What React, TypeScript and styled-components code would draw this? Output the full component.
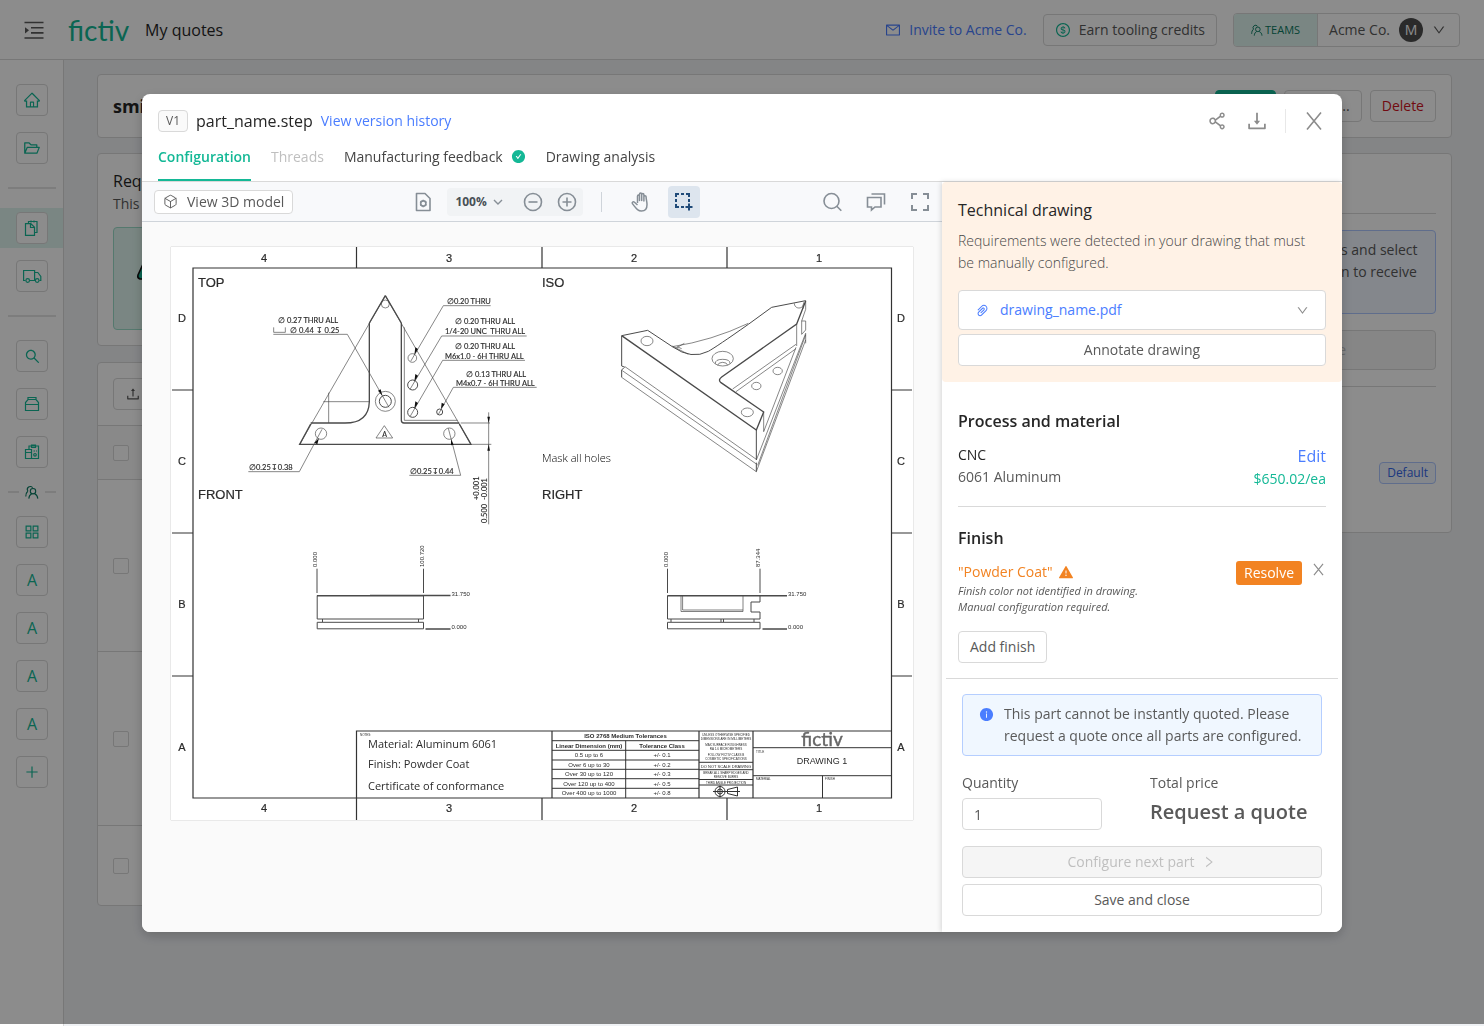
import React from "react";
import styled, { createGlobalStyle, css } from "styled-components";
import {
  AiOutlineHome,
  AiOutlineFolderOpen,
  AiOutlineSearch,
  AiOutlineAppstore,
  AiOutlinePlus,
  AiOutlineMail,
  AiOutlineDollarCircle,
  AiOutlineDown,
  AiOutlineRight,
  AiOutlineShareAlt,
  AiOutlineDownload,
  AiOutlineUpload,
  AiOutlinePaperClip,
  AiFillCheckCircle,
  AiFillInfoCircle,
  AiFillWarning,
} from "react-icons/ai";
import { Box } from "lucide-react";

const teal = "#14b896";
const blue = "#4a7dff";
const line = "#d9d9d9";
const ink = "#262626";
const soft = "#595959";
const orange = "#f28322";

const GlobalStyle = createGlobalStyle`
  *, *::before, *::after { box-sizing: border-box; }
  body { margin: 0; font-family: "Open Sans", "Noto Sans", sans-serif; font-size: 14px; line-height: 22px; color: ${soft}; background: #f0f2f5; }
  button, input { font: inherit; color: inherit; }
  button { cursor: pointer; }
  h1, h2, h3, p { margin: 0; padding: 0; }
  a { color: ${blue}; text-decoration: none; }
  svg { flex: none; }
`;

/* ---------- application shell ---------- */

const Shell = styled.div`
  min-height: 100vh;
  display: flex;
  flex-direction: column;
`;

const TopBar = styled.header`
  height: 60px;
  padding: 0 24px;
  display: flex;
  align-items: center;
  background: #fff;
  border-bottom: 1px solid ${line};
`;

const PlainButton = styled.button`
  display: inline-flex;
  align-items: center;
  justify-content: center;
  padding: 0;
  border: 0;
  background: none;
`;

const Logo = styled.span`
  margin: 0 16px 0 24px;
  color: ${teal};
  font-family: Lato, sans-serif;
  font-size: 28px;
  line-height: 32px;
`;

const PageName = styled.h1`
  font-size: 16px;
  font-weight: 400;
  color: ${ink};
`;

const TopActions = styled.div`
  margin-left: auto;
  display: flex;
  align-items: center;
  gap: 16px;
`;

const IconLink = styled.a`
  display: inline-flex;
  align-items: center;
  gap: 8px;
`;

const Button = styled.button<{ $block?: boolean; $tone?: string }>`
  display: inline-flex;
  align-items: center;
  justify-content: center;
  gap: 8px;
  height: 32px;
  padding: 0 11px;
  border: 1px solid ${line};
  border-radius: 4px;
  background: #fff;
  color: ${(p) => p.$tone || soft};
  white-space: nowrap;
  ${(p) => p.$block && css`width: 100%;`}
  &:disabled {
    background: #f5f5f5;
    color: #bfbfbf;
    cursor: default;
  }
`;

const TeamSwitch = styled.div`
  display: flex;
  height: 34px;
  border: 1px solid ${line};
  border-radius: 4px;
  overflow: hidden;
`;

const TeamTag = styled.span`
  display: flex;
  align-items: center;
  gap: 2px;
  padding: 0 17px;
  border-right: 1px solid ${line};
  background: #def5ee;
  color: #0a7a62;
  font-size: 11px;
`;

const Account = styled(PlainButton)`
  gap: 9px;
  padding: 0 13px 0 11px;
`;

const Avatar = styled.span`
  display: grid;
  place-items: center;
  width: 24px;
  height: 24px;
  border-radius: 50%;
  background: #4d4d4d;
  color: #fff;
`;

const Main = styled.div`
  flex: 1;
  display: flex;
`;

const SideNav = styled.nav`
  width: 64px;
  flex: none;
  padding-top: 20px;
  display: flex;
  flex-direction: column;
  gap: 8px;
  background: #fff;
  border-right: 1px solid ${line};
`;

const NavSlot = styled.div<{ $active?: boolean }>`
  height: 40px;
  padding-left: 16px;
  display: flex;
  align-items: center;
  background: ${(p) => (p.$active ? "#def5ee" : "transparent")};
`;

const NavButton = styled.button`
  display: grid;
  place-items: center;
  width: 32px;
  height: 32px;
  padding: 0;
  border: 1px solid ${line};
  border-radius: 4px;
  background: #fff;
  color: ${teal};
  font-size: 16px;
  font-weight: 500;
`;

const NavRule = styled.div`
  height: 24px;
  padding: 0 7px 0 8px;
  display: flex;
  align-items: center;
  gap: 6px;
  color: #0a7a62;
  &::before,
  &::after {
    content: "";
    flex: 1;
    height: 2px;
    background: #e4e4e4;
  }
`;

const NavRulePlain = styled(NavRule)`
  gap: 0;
`;

const Content = styled.main`
  flex: 1;
  padding: 14px 32px 0 33px;
  display: flex;
  flex-direction: column;
  gap: 15px;
`;

const Card = styled.section`
  border: 1px solid ${line};
  border-radius: 4px;
  background: #fff;
`;

const TitleCard = styled(Card)`
  height: 64px;
  padding: 0 15px;
  display: flex;
  align-items: center;
  gap: 8px;
`;

const QuoteName = styled.h2`
  margin-right: auto;
  font-size: 18px;
  font-weight: 700;
  color: ${ink};
`;

const Primary = styled(Button)`
  width: 61px;
  background: ${teal};
  border-color: ${teal};
`;

const Clipped = styled(Button)`
  width: 78px;
  justify-content: flex-end;
`;

const Columns = styled.div`
  display: flex;
  align-items: flex-start;
  gap: 16px;
`;

const MainColumn = styled.div`
  flex: 1;
  display: flex;
  flex-direction: column;
  gap: 16px;
`;

const RequirementCard = styled(Card)`
  padding: 15px;
`;

const SmallHeading = styled.h3`
  font-size: 16px;
  line-height: 24px;
  font-weight: 400;
  color: ${ink};
`;

const Choice = styled.div`
  width: 180px;
  height: 103px;
  margin-top: 12px;
  padding: 32px 21px;
  border: 1px solid #9bdcc9;
  border-radius: 4px;
  background: #def5ee;
`;

const PartsToolbar = styled.div`
  padding: 15px;
`;

const PartsRow = styled.div<{ $size: number; $head?: boolean }>`
  height: ${(p) => p.$size}px;
  padding-left: 15px;
  display: flex;
  align-items: center;
  border-top: 1px solid ${line};
  background: ${(p) => (p.$head ? "#fafafa" : "transparent")};
`;

const Tick = styled.input`
  appearance: none;
  width: 16px;
  height: 16px;
  margin: 0;
  border: 1px solid ${line};
  border-radius: 2px;
  background: #fff;
`;

const SummaryCard = styled(Card)`
  width: 340px;
  height: 380px;
  padding: 59px 15px 0;
  display: flex;
  flex-direction: column;
  align-items: stretch;
`;

const Rule = styled.hr`
  width: 100%;
  margin: 0;
  border: 0;
  border-top: 1px solid ${line};
`;

const SummaryNotice = styled.div`
  height: 84px;
  margin: 16px 0;
  padding: 8px 0 0 212px;
  border: 1px solid #adc6ff;
  border-radius: 4px;
  background: #f0f6ff;
  white-space: nowrap;
`;

const SummaryButton = styled(Button)`
  height: 40px;
  margin-bottom: 16px;
  padding: 0 89px;
  justify-content: flex-end;
`;

const DefaultTag = styled.span`
  align-self: flex-end;
  margin-top: 75px;
  padding: 0 7px;
  border: 1px solid #adc6ff;
  border-radius: 4px;
  background: #f0f6ff;
  color: #3566e8;
  font-size: 12px;
  line-height: 20px;
`;

/* ---------- dialog ---------- */

const Scrim = styled.div`
  position: fixed;
  inset: 0 0 2px;
  padding-top: 94px;
  display: flex;
  justify-content: center;
  align-items: flex-start;
  background: rgba(0, 0, 0, 0.45);
`;

const Dialog = styled.section`
  width: 1200px;
  max-width: calc(100vw - 48px);
  border-radius: 8px;
  overflow: hidden;
  background: #fff;
  box-shadow: 0 4px 12px rgba(0, 0, 0, 0.2);
`;

const DialogHead = styled.header`
  padding: 16px 16px 0;
  border-bottom: 1px solid ${line};
`;

const HeadRow = styled.div`
  height: 22px;
  display: flex;
  align-items: center;
  gap: 8px;
`;

const Version = styled.span`
  padding: 0 7px;
  border: 1px solid ${line};
  border-radius: 4px;
  background: #fafafa;
  font-size: 12px;
  line-height: 20px;
`;

const FileName = styled.h2`
  font-size: 16px;
  font-weight: 400;
  color: ${ink};
`;

const HeadTools = styled.div`
  margin-left: auto;
  display: flex;
  align-items: center;
  gap: 16px;
  color: #8c8c8c;
`;

const HeadTool = styled(PlainButton)`
  width: 24px;
  height: 24px;
`;

const HeadDivider = styled.span`
  width: 1px;
  height: 24px;
  background: #e8e8e8;
`;

const Tabs = styled.div`
  margin-top: 8px;
  display: flex;
  gap: 20px;
`;

const Tab = styled.button<{ $active?: boolean }>`
  height: 41px;
  padding: 0 0 6px;
  display: inline-flex;
  align-items: center;
  gap: 8px;
  border: 0;
  border-bottom: 2px solid ${(p) => (p.$active ? teal : "transparent")};
  background: none;
  color: ${(p) => (p.$active ? teal : "#454545")};
  font-weight: ${(p) => (p.$active ? 600 : 400)};
  &:disabled {
    color: #bfbfbf;
  }
`;

const DialogBody = styled.div`
  display: flex;
`;

const Viewer = styled.div`
  flex: 1;
  min-width: 0;
  background: #fafafa;
`;

const ViewerBar = styled.div`
  height: 40px;
  padding: 0 12px;
  display: flex;
  align-items: center;
  border-bottom: 1px solid #cfd4da;
  background: #f8f9fb;
  color: #868e96;
`;

const ModelButton = styled(Button)`
  height: 24px;
  padding: 0 8px;
  gap: 9px;
`;

const CentreTools = styled.div`
  margin-left: 114px;
  display: flex;
  align-items: center;
`;

const ToolButton = styled(PlainButton)<{ $active?: boolean }>`
  width: 32px;
  height: 32px;
  border-radius: 4px;
  color: ${(p) => (p.$active ? "#1f4a78" : "inherit")};
  background: ${(p) => (p.$active ? "#dde5ee" : "none")};
`;

const ZoomGroup = styled.div`
  height: 28px;
  margin: 0 18px 0 8px;
  padding-left: 8px;
  display: flex;
  align-items: center;
  gap: 2px;
  border-radius: 4px;
  background: #f1f3f5;
`;

const ZoomLevel = styled(PlainButton)`
  margin-right: 12px;
  gap: 6px;
  color: #485056;
  font-size: 12px;
  font-weight: 700;
  svg {
    color: #868e96;
  }
`;

const ToolDivider = styled.span`
  width: 1px;
  height: 20px;
  background: #cfd4da;
`;

const ModeTools = styled.div`
  margin-left: 22px;
  display: flex;
  gap: 12px;
`;

const EndTools = styled.div`
  margin-left: auto;
  margin-right: -6px;
  display: flex;
  gap: 12px;
`;

const Sheet = styled.div`
  margin: 25px 29px 0;
  background: #fff;
  box-shadow: 0 0 1px rgba(0, 0, 0, 0.4);
  svg {
    display: block;
    width: 100%;
    height: auto;
  }
`;

const Panel = styled.aside`
  width: 400px;
  flex: none;
  z-index: 1;
  background: #fff;
  box-shadow: -1px 0 5px rgba(0, 0, 0, 0.15);
`;

const Warning = styled.section`
  padding: 16px;
  border-radius: 4px;
  background: #fff2e6;
  p {
    margin: 8px 0 16px;
    padding-right: 12px;
    color: #484848;
    font-weight: 300;
  }
`;

const DrawingPicker = styled.button`
  width: 100%;
  height: 40px;
  margin-bottom: 4px;
  padding: 0 16px;
  display: flex;
  align-items: center;
  gap: 10px;
  border: 1px solid ${line};
  border-radius: 4px;
  background: #fff;
  color: ${blue};
  svg:last-child {
    margin-left: auto;
    color: #8c8c8c;
  }
`;

const Section = styled.section`
  margin: 0 16px;
`;

const ProcessSection = styled(Section)`
  padding: 27px 0 16px;
  border-bottom: 1px solid ${line};
`;

const FinishSection = styled(Section)`
  padding: 19px 0 15px;
`;

const BoldHeading = styled.h3`
  font-size: 16px;
  line-height: 24px;
  font-weight: 600;
  color: ${ink};
`;

const Split = styled.div`
  margin-top: 11px;
  display: flex;
  justify-content: space-between;
`;

const Strong = styled.div`
  color: ${ink};
`;

const Price = styled.div`
  text-align: right;
  color: ${teal};
`;

const EditLink = styled.a`
  font-size: 16px;
  line-height: 24px;
`;

const FinishName = styled.div`
  display: flex;
  align-items: center;
  gap: 5px;
  color: ${orange};
`;

const FinishNote = styled.p`
  font-size: 11px;
  line-height: 16px;
  font-style: italic;
`;

const FinishActions = styled.div`
  display: flex;
  align-items: flex-start;
  gap: 8px;
`;

const Resolve = styled.button`
  height: 24px;
  padding: 0 8px;
  border: 0;
  border-radius: 3px;
  background: ${orange};
  color: #fff;
`;

const Dismiss = styled(PlainButton)`
  width: 16px;
  height: 16px;
  color: #8c8c8c;
`;

const AddFinish = styled(Button)`
  margin-top: 16px;
`;

const Footer = styled.footer`
  margin: 0 4px;
  padding: 15px 16px 16px;
  border-top: 1px solid ${line};
`;

const Notice = styled.div`
  padding: 8px 16px;
  display: flex;
  gap: 10px;
  border: 1px solid #b5ceff;
  border-radius: 4px;
  background: #f0f7ff;
  svg {
    margin-top: 4px;
    color: ${blue};
  }
`;

const QuoteRow = styled.div`
  margin: 16px 0;
  display: flex;
  gap: 48px;
`;

const Field = styled.label`
  display: flex;
  flex-direction: column;
  gap: 4px;
`;

const QuantityInput = styled.input`
  width: 140px;
  height: 32px;
  padding: 0 11px;
  border: 1px solid ${line};
  border-radius: 4px;
  background: #fff;
`;

const Total = styled.strong`
  font-size: 20px;
  line-height: 28px;
  font-weight: 600;
`;

const NextButton = styled(Button)`
  margin-bottom: 6px;
`;

/* ---------- icons ---------- */

type GlyphProps = { size?: number; box?: number; width?: number; children: React.ReactNode };

const Glyph = ({ size = 20, box = 20, width = 1.6, children }: GlyphProps) => (
  <svg width={size} height={size} viewBox={`0 0 ${box} ${box}`} fill="none" stroke="currentColor" strokeWidth={width} aria-hidden="true">
    {children}
  </svg>
);

const MenuIcon = () => (
  <Glyph width={1.6}>
    <path d="M.5 2.500h19M7 7.700h12.500M7 12.900h12.500M.5 18h19" />
    <path d="M1 7.200v6.200l4-3.100z" fill="currentColor" stroke="none" />
  </Glyph>
);

const CrossIcon = ({ size, width }: { size: number; width: number }) => (
  <Glyph size={size} box={20} width={width}>
    <path d="M3 1.500L17 18.500M17 1.500L3 18.500" />
  </Glyph>
);

const PeopleIcon = ({ size = 14 }: { size?: number }) => (
  <Glyph size={size} box={14} width={1.1}>
    <path d="M2.900 6A2.700 2.700 0 1 1 7.600 2.700M.8 11.500C.8 8.800 1.600 7.200 2.900 6" />
    <circle cx="8" cy="6.200" r="2.700" />
    <path d="M3.800 13.600c.2-2.600 1.200-4 2.900-4.900M9.600 8.800c2 .9 3 2.300 3.200 4.800" />
  </Glyph>
);

const PagesIcon = () => (
  <Glyph size={18} box={18} width={1.2}>
    <path d="M5.500 4.500V2.500h8.500v11h-2.500M8 1.500v2M11 1.500v2" />
    <path d="M2.500 4.600h5.300l3.700 3.700v8h-9zM7.500 4.800v3.700h3.800" />
  </Glyph>
);

const TruckIcon = () => (
  <Glyph size={20} box={20} width={1.2}>
    <path d="M3.500 14.500H1.600v-10h11v10H8M12.600 6.500h3.200l3 4v4h-1.400M13.500 14.500h-1" />
    <circle cx="5.700" cy="14.500" r="1.800" />
    <circle cx="15.200" cy="14.500" r="1.800" />
  </Glyph>
);

const CaseIcon = () => (
  <Glyph size={18} box={18} width={1.2}>
    <path d="M5 4.500V2.500h8v2M2.500 9V7.500l2.500-3h8l2.500 3V15.500h-13zM2.500 9.500h13" />
  </Glyph>
);

const ClipboardIcon = () => (
  <Glyph size={18} box={18} width={1.2}>
    <path d="M6 6V3h9.500v12.500H8.500M8.500 2h4v2.500h-4zM2.500 6.500h6v9h-6zM2.500 9.500h6M10.500 8h1.500M13 8h1" />
    <circle cx="12" cy="11.800" r="1.300" />
  </Glyph>
);

const DocGearIcon = () => (
  <Glyph>
    <path d="M3.500 1.500h8.500l5 5v12h-13.500z" strokeLinejoin="round" />
    <circle cx="10.300" cy="11.500" r="2.600" />
    <path d="M10.300 7.800v1.200M10.300 14v1.200M7.100 9.700l1.100.6M12.400 12.700l1.100.6M7.100 13.300l1.100-.6M12.400 10.300l1.100-.6" />
  </Glyph>
);

const MinusIcon = () => (
  <Glyph>
    <circle cx="10" cy="10" r="8.500" />
    <path d="M5.500 10h9" />
  </Glyph>
);

const PlusCircleIcon = () => (
  <Glyph>
    <circle cx="10" cy="10" r="8.500" />
    <path d="M5.500 10h9M10 5.500v9" />
  </Glyph>
);

const HandIcon = () => (
  <Glyph width={1.5}>
    <path d="M6.500 11V4.200c0-1.500 2-1.500 2 0V8.500 2.200c0-1.500 2.200-1.500 2.200 0V8.500 2.700c0-1.500 2.200-1.500 2.200 0V9 4.700c0-1.400 2.200-1.400 2.200 0 0 2.800.9 4.800.9 8 0 3.600-2 6.300-5.500 6.300-4 0-5.400-2.800-9-7.200-1-1.400.7-2.600 2-1.500L6.500 13" transform="translate(1 0)" strokeLinejoin="round" />
  </Glyph>
);

const MarqueeIcon = () => (
  <Glyph width={2}>
    <path d="M2 5V2h3M7 2h3M12 2h3v3M15 7v3M2 7v3M2 12v3h3M7 15h3" />
    <path d="M15 11.500v7M11.500 15h7" />
  </Glyph>
);

const MagnifierIcon = () => (
  <Glyph>
    <circle cx="9.500" cy="9" r="7.500" />
    <path d="M14.800 14.300l4.500 4.500" />
  </Glyph>
);

const CommentIcon = () => (
  <Glyph>
    <path d="M5.500 2h13v10.500M1.500 5.500h13.500v9.500H9l-3.500 3v-3h-4z" />
  </Glyph>
);

const ExpandIcon = () => (
  <Glyph width={2}>
    <path d="M2 7V2h5M13 2h5v5M18 13v5h-5M7 18H2v-5" />
  </Glyph>
);

/* ---------- drawing sheet ---------- */

const SheetSvg = styled.svg`
  font-family: "Liberation Sans", Arial, sans-serif;
  fill: #2b2b2b;
`;

const zoneNumbers = [["4", 264], ["3", 449], ["2", 634], ["1", 819]] as const;
const zoneLetters = [["D", 318], ["C", 461], ["B", 604], ["A", 747]] as const;
const viewTitles = [["TOP", 198, 287], ["ISO", 542, 287], ["FRONT", 198, 499], ["RIGHT", 542, 499]] as const;
const callouts: [string, number, number][] = [
  ["∅0.20 THRU", 447, 304],
  ["∅ 0.27 THRU ALL", 278, 323],
  ["∅ 0.44 ↧ 0.25", 290, 333],
  ["∅ 0.20 THRU ALL", 455, 324],
  ["1/4-20 UNC\u00a0 THRU ALL", 445, 334],
  ["∅ 0.20 THRU ALL", 455, 349],
  ["M6x1.0 - 6H THRU ALL", 445, 359],
  ["∅ 0.13 THRU ALL", 466, 377],
  ["M4x0.7 - 6H THRU ALL", 456, 386],
  ["∅0.25↧0.38", 249, 470],
  ["∅0.25↧0.44", 410, 474],
];
const tolerances = [
  ["0.5 up to 6", "+/- 0.1"],
  ["Over 6 up to 30", "+/- 0.2"],
  ["Over 30 up to 120", "+/- 0.3"],
  ["Over 120 up to 400", "+/- 0.5"],
  ["Over 400 up to 1000", "+/- 0.8"],
];
const finePrint: [string, number][] = [
  ["UNLESS OTHERWISE SPECIFIED", 736],
  ["DIMENSIONS ARE IN MILLIMETERS", 740],
  ["MAX SURFACE ROUGHNESS", 746],
  ["RA 1.6 MICROMETERS", 750],
  ["FOLLOW FICTIV CLASS B", 756],
  ["COSMETIC SPECIFICATIONS", 760],
  ["BREAK ALL SHARP EDGES AND", 774],
  ["REMOVE BURRS", 778],
];

const DrawingSheet = () => (
  <SheetSvg viewBox="171 247 742 573" role="img" aria-label="Technical drawing">
    <g fill="none" stroke="#333" strokeWidth="1.200">
      <path d="M193 268H891.500V798H193z" />
      <path d="M356.500 247v21M542 247v21M727 247v21M356.500 798v22M542 798v22M727 798v22" />
      <path d="M172 390h21M172 533h21M172 676h21M891.500 390H912M891.500 533H912M891.500 676H912" />
      <path d="M356.500 798V731H891.500M552 731V798M699 731V798M753 731V798" />
    </g>
    <g fontSize="11" textAnchor="middle" stroke="#2b2b2b" strokeWidth=".2">
      {zoneNumbers.map(([n, x]) => (
        <React.Fragment key={n}>
          <text x={x} y={262}>{n}</text>
          <text x={x} y={812}>{n}</text>
        </React.Fragment>
      ))}
      {zoneLetters.map(([n, y]) => (
        <React.Fragment key={n}>
          <text x={182} y={y + 4}>{n}</text>
          <text x={901} y={y + 4}>{n}</text>
        </React.Fragment>
      ))}
    </g>
    <g fontSize="13" stroke="#2b2b2b" strokeWidth=".2">
      {viewTitles.map(([n, x, y]) => (
        <text key={n} x={x} y={y}>{n}</text>
      ))}
    </g>

    {/* top view */}
    <g transform="translate(170 240) scale(.33333)" fill="none" stroke="#4a4a4a" strokeWidth="2">
      <path d="M389 613L646 167L903 613" />
      <path strokeWidth="4" d="M646 167L598 249M646 167L694 249M422 552L389 613H903L868 552M598 249V485Q596 549 525 549H422M694 249V541Q694 549 702 549H868" />
      <path d="M703 262V541H863M460 485H598M476 458V549" />
      <circle cx="646" cy="192" r="12" />
      <circle cx="646" cy="484" r="30" />
      <circle cx="646" cy="484" r="18" strokeWidth="3" />
      <circle cx="727" cy="354" r="13" />
      <circle cx="728" cy="435" r="15" strokeWidth="3" />
      <circle cx="728" cy="517" r="15" strokeWidth="3" />
      <circle cx="809" cy="516" r="9" strokeWidth="3" />
      <circle cx="453" cy="581" r="17" />
      <circle cx="838" cy="581" r="17" />
      <path d="M643 557L618 594H668z" />
      <path d="M962 197H820L722 364M1070 288H815L720 448M1065 361H818L720 530M1100 442H850L804 525M310 283H532L657 502M311 262V277H346V262M235 695H388L456 568M718 706H872L835 565" />
      <path d="M956 517V853M872 549H960M905 613H964" />
      <g fill="#111" stroke="none">
        <path d="M733 345L736 322L744 327zM733 425L736 402L744 407zM733 507L736 484L744 489zM813 507L815 488L824 493zM637 467L624 452L632 448zM447 594L433 608L442 613zM843 598L843 616L851 614zM956 549L952 530H960zM956 613L952 632H960z" />
      </g>
    </g>
    <g fontSize="7.500" fontFamily="Lato, sans-serif" stroke="#2b2b2b" strokeWidth=".15">
      {callouts.map(([t, x, y], i) => (
        <text key={i} x={x} y={y}>{t}</text>
      ))}
      <text x="384.500" y="436.500" textAnchor="middle" fontSize="7">A</text>
      <text transform="translate(487 523) rotate(-90)">0.500{"\u00a0 "}-0.001</text>
      <text transform="translate(479 500) rotate(-90)">+0.001</text>
    </g>

    {/* isometric view */}
    <g transform="translate(535 240) scale(.33333)" fill="none" stroke="#4a4a4a" strokeWidth="2">
      <path strokeWidth="4" d="M260 287L664 570L686 516L558 428Q548 420 560 411L785 252L812 183" />
      <path strokeWidth="3" d="M260 287L338 271L412 320Q470 360 520 334Q545 320 640 253L710 202L812 182M260 287V378L270 382M664 570V660M260 412V390L266 384M664 695V668" />
      <path d="M412 320Q530 302 640 250M420 326L448 310M412 318L460 343M426 320L440 326" />
      <path d="M270 380L664 658M262 392L664 672M260 412L664 695L812 300M668 676L812 285M664 660L812 280" />
      <path d="M812 182V208L800 243V283M800 243H812V270L800 283M785 252V318M812 280V310M686 516V575L783 322M783 313L593 447M783 326L603 455M806 187L804 206" />
      <ellipse cx="336" cy="303" rx="18" ry="14" />
      <ellipse cx="637" cy="517" rx="18" ry="13" />
      <ellipse cx="728" cy="393" rx="14" ry="11" />
      <ellipse cx="664" cy="438" rx="14" ry="11" />
      <path d="M778 190C778 208 804 208 804 194" />
      <ellipse cx="563" cy="356" rx="32" ry="22" />
      <path d="M541 371Q540 358 563 358Q586 358 585 371M548 376Q550 367 563 367Q576 367 578 376" />
    </g>
    <text x="542" y="462" fontSize="11" fontFamily="Open Sans, sans-serif" fontWeight="300" fill="#000">Mask all holes</text>

    {/* front and right views */}
    <g fill="none" stroke="#4a4a4a" strokeWidth="1">
      <path d="M317 568.700V593M423.500 568.700V593M317.200 595.500V619H423.500V595.500M317.200 622.300H423.500V628.800H317.200zM322.500 619v3M418.500 619v3" />
      <path strokeWidth="1.400" d="M317 595.700H423.500M370 595.500H450.500M425.500 629H450.500" />
      <path d="M667.500 568.700V593M760 568.700V593M667.500 595.500V619H760V612H751V602H760V596M667.500 622.300H760V628.800H667.500zM671 619v3M721 619v3M723.500 619v3M754 619v3" />
      <path strokeWidth=".7" d="M681 596V611.500H743V596M682.600 596V610H743" />
      <path strokeWidth="1.400" d="M667.500 595.700H787M762.500 629H787" />
    </g>
    <g fontSize="6">
      <text x="451.500" y="596">31.750</text>
      <text x="451.500" y="629">0.000</text>
      <text x="788" y="596">31.750</text>
      <text x="788" y="629">0.000</text>
      <text transform="translate(317 567) rotate(-90)">0.000</text>
      <text transform="translate(424 567) rotate(-90)">100.720</text>
      <text transform="translate(668 567) rotate(-90)">0.000</text>
      <text transform="translate(760 567) rotate(-90)">87.344</text>
    </g>

    {/* title block */}
    <g fill="none" stroke="#333" strokeWidth="1">
      <path d="M552 740.700H699M552 750.300H699M552 760H699M552 769.300H699M552 778.700H699M552 788.300H699M625.700 740.700V798" />
      <path d="M699 762.300H753M699 769.700H753M699 779.500H753M699 785H753M753 747.700H891M753 775.700H891M822.500 775.700V798" />
      <circle cx="720" cy="791.500" r="5" />
      <circle cx="720" cy="791.500" r="2.500" />
      <path d="M713 791.500H740M720 785.500V797.500M727.500 789.500L737.500 787V796L727.500 793.500z" />
    </g>
    <g fontFamily="Open Sans, sans-serif" fontSize="11">
      <text x="368" y="748">Material: Aluminum 6061</text>
      <text x="368" y="768">Finish: Powder Coat</text>
      <text x="368" y="790">Certificate of conformance</text>
    </g>
    <g fontSize="6" textAnchor="middle">
      <g fontWeight="700">
        <text x="625.500" y="738">ISO 2768 Medium Tolerances</text>
        <text x="589" y="747.500">Linear Dimension (mm)</text>
        <text x="662" y="747.500">Tolerance Class</text>
      </g>
      {tolerances.map(([range, value], i) => (
        <React.Fragment key={range}>
          <text x="589" y={757 + i * 9.5}>{range}</text>
          <text x="662" y={757 + i * 9.5}>{value}</text>
        </React.Fragment>
      ))}
    </g>
    <g fontSize="3" textAnchor="middle">
      {finePrint.map(([t, y]) => (
        <text key={t} x="726" y={y}>{t}</text>
      ))}
      <text x="726" y="783.500">THIRD ANGLE PROJECTION</text>
      <text x="726" y="767.500" fontSize="4">DO NOT SCALE DRAWING</text>
    </g>
    <g fontSize="3">
      <text x="360" y="736">NOTES:</text>
      <text x="756" y="752.500">TITLE</text>
      <text x="756" y="780">MATERIAL</text>
      <text x="825" y="780">FINISH</text>
    </g>
    <text x="822" y="746" textAnchor="middle" fontSize="19" fontFamily="Lato, sans-serif" fill="#666" stroke="#666" strokeWidth=".4">fictiv</text>
    <text x="822" y="764" textAnchor="middle" fontSize="9">DRAWING 1</text>
  </SheetSvg>
);

/* ---------- page ---------- */

const navGroups: { label: string; icon: React.ReactNode; active?: boolean }[][] = [
  [
    { label: "Home", icon: <AiOutlineHome size={18} /> },
    { label: "Projects", icon: <AiOutlineFolderOpen size={18} /> },
  ],
  [
    { label: "Quotes", icon: <PagesIcon />, active: true },
    { label: "Orders", icon: <TruckIcon /> },
  ],
  [
    { label: "Search", icon: <AiOutlineSearch size={17} /> },
    { label: "Materials", icon: <CaseIcon /> },
    { label: "Inspections", icon: <ClipboardIcon /> },
  ],
];

const Background = () => (
  <Shell>
    <TopBar>
      <PlainButton aria-label="Expand menu">
        <MenuIcon />
      </PlainButton>
      <Logo>fictiv</Logo>
      <PageName>My quotes</PageName>
      <TopActions>
        <IconLink href="#invite">
          <AiOutlineMail size={16} />
          Invite to Acme Co.
        </IconLink>
        <Button>
          <AiOutlineDollarCircle size={16} color={teal} />
          Earn tooling credits
        </Button>
        <TeamSwitch>
          <TeamTag>
            <PeopleIcon size={12} />
            TEAMS
          </TeamTag>
          <Account>
            Acme Co.
            <Avatar>M</Avatar>
            <AiOutlineDown size={14} />
          </Account>
        </TeamSwitch>
      </TopActions>
    </TopBar>
    <Main>
      <SideNav>
        {navGroups.map((group, g) => (
          <React.Fragment key={g}>
            {g > 0 && <NavRulePlain />}
            {group.map((item) => (
              <NavSlot key={item.label} $active={item.active}>
                <NavButton aria-label={item.label}>{item.icon}</NavButton>
              </NavSlot>
            ))}
          </React.Fragment>
        ))}
        <NavRule>
          <PeopleIcon />
        </NavRule>
        <NavSlot>
          <NavButton aria-label="Dashboard"><AiOutlineAppstore size={18} /></NavButton>
        </NavSlot>
        {[1, 2, 3, 4].map((n) => (
          <NavSlot key={n}>
            <NavButton>A</NavButton>
          </NavSlot>
        ))}
        <NavSlot>
          <NavButton aria-label="Add team"><AiOutlinePlus size={16} /></NavButton>
        </NavSlot>
      </SideNav>
      <Content>
        <TitleCard>
          <QuoteName>smi</QuoteName>
          <Primary aria-label="Share quote" />
          <Clipped>...</Clipped>
          <Button $tone="#cf1322">Delete</Button>
        </TitleCard>
        <Columns>
          <MainColumn>
            <RequirementCard>
              <SmallHeading>Req</SmallHeading>
              <p>This</p>
              <Choice>
                <Glyph size={22} box={22}>
                  <path d="M9 2L3 15q-1 3 2 4h14V2z" fill={teal} stroke="#111" />
                </Glyph>
              </Choice>
            </RequirementCard>
            <Card>
              <PartsToolbar>
                <Button aria-label="Upload parts"><AiOutlineUpload size={16} /></Button>
              </PartsToolbar>
              <PartsRow $size={54} $head><Tick type="checkbox" aria-label="Select all parts" /></PartsRow>
              <PartsRow $size={172}><Tick type="checkbox" aria-label="Select part 1" /></PartsRow>
              <PartsRow $size={174}><Tick type="checkbox" aria-label="Select part 2" /></PartsRow>
              <PartsRow $size={80}><Tick type="checkbox" aria-label="Select part 3" /></PartsRow>
            </Card>
          </MainColumn>
          <SummaryCard>
            <Rule />
            <SummaryNotice>
              s and select
              <br />n to receive
            </SummaryNotice>
            <SummaryButton disabled>e</SummaryButton>
            <Rule />
            <DefaultTag>Default</DefaultTag>
          </SummaryCard>
        </Columns>
      </Content>
    </Main>
  </Shell>
);

export default function App() {
  return (
    <>
      <GlobalStyle />
      <Background />
      <Scrim>
        <Dialog role="dialog" aria-label="part_name.step">
          <DialogHead>
            <HeadRow>
              <Version>V1</Version>
              <FileName>part_name.step</FileName>
              <a href="#history">View version history</a>
              <HeadTools>
                <HeadTool aria-label="Share"><AiOutlineShareAlt size={22} /></HeadTool>
                <HeadTool aria-label="Download"><AiOutlineDownload size={24} /></HeadTool>
                <HeadDivider />
                <HeadTool aria-label="Close"><CrossIcon size={20} width={1.6} /></HeadTool>
              </HeadTools>
            </HeadRow>
            <Tabs role="tablist">
              <Tab role="tab" $active>Configuration</Tab>
              <Tab role="tab" disabled>Threads</Tab>
              <Tab role="tab">
                Manufacturing feedback
                <AiFillCheckCircle size={15} color={teal} />
              </Tab>
              <Tab role="tab">Drawing analysis</Tab>
            </Tabs>
          </DialogHead>
          <DialogBody>
            <Viewer>
              <ViewerBar>
                <ModelButton><Box size={15} strokeWidth={1.5} />View 3D model</ModelButton>
                <CentreTools>
                  <ToolButton aria-label="Page settings"><DocGearIcon /></ToolButton>
                  <ZoomGroup>
                    <ZoomLevel>100%<Glyph size={10} box={10} width={1.4}><path d="M1 3l4 4 4-4" /></Glyph></ZoomLevel>
                    <ToolButton aria-label="Zoom out"><MinusIcon /></ToolButton>
                    <ToolButton aria-label="Zoom in"><PlusCircleIcon /></ToolButton>
                  </ZoomGroup>
                  <ToolDivider />
                  <ModeTools>
                    <ToolButton aria-label="Pan"><HandIcon /></ToolButton>
                    <ToolButton aria-label="Select area" $active><MarqueeIcon /></ToolButton>
                  </ModeTools>
                </CentreTools>
                <EndTools>
                  <ToolButton aria-label="Search drawing"><MagnifierIcon /></ToolButton>
                  <ToolButton aria-label="Comments"><CommentIcon /></ToolButton>
                  <ToolButton aria-label="Full screen"><ExpandIcon /></ToolButton>
                </EndTools>
              </ViewerBar>
              <Sheet><DrawingSheet /></Sheet>
            </Viewer>
            <Panel>
              <Warning>
                <SmallHeading>Technical drawing</SmallHeading>
                <p>Requirements were detected in your drawing that must be manually configured.</p>
                <DrawingPicker>
                  <AiOutlinePaperClip size={15} />
                  drawing_name.pdf
                  <AiOutlineDown size={13} />
                </DrawingPicker>
                <Button $block>Annotate drawing</Button>
              </Warning>
              <ProcessSection>
                <BoldHeading>Process and material</BoldHeading>
                <Split>
                  <div>
                    <Strong>CNC</Strong>
                    <div>6061 Aluminum</div>
                  </div>
                  <Price>
                    <EditLink href="#edit">Edit</EditLink>
                    <div>$650.02/ea</div>
                  </Price>
                </Split>
              </ProcessSection>
              <FinishSection>
                <BoldHeading>Finish</BoldHeading>
                <Split>
                  <div>
                    <FinishName>"Powder Coat"<AiFillWarning size={16} /></FinishName>
                    <FinishNote>
                      Finish color not identified in drawing.
                      <br />
                      Manual configuration required.
                    </FinishNote>
                  </div>
                  <FinishActions>
                    <Resolve>Resolve</Resolve>
                    <Dismiss aria-label="Remove finish"><CrossIcon size={13} width={1.8} /></Dismiss>
                  </FinishActions>
                </Split>
                <AddFinish>Add finish</AddFinish>
              </FinishSection>
              <Footer>
                <Notice>
                  <AiFillInfoCircle size={15} />
                  <p>This part cannot be instantly quoted. Please request a quote once all parts are configured.</p>
                </Notice>
                <QuoteRow>
                  <Field>
                    Quantity
                    <QuantityInput type="text" defaultValue="1" />
                  </Field>
                  <Field as="div">
                    Total price
                    <Total>Request a quote</Total>
                  </Field>
                </QuoteRow>
                <NextButton $block disabled>Configure next part<AiOutlineRight size={14} /></NextButton>
                <Button $block>Save and close</Button>
              </Footer>
            </Panel>
          </DialogBody>
        </Dialog>
      </Scrim>
    </>
  );
}
